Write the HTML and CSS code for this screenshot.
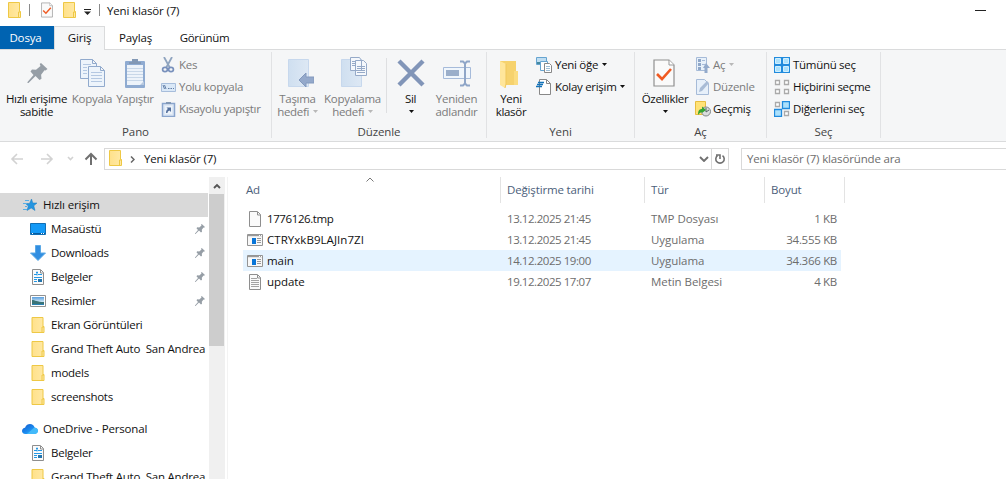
FILE: index.html
```html
<!DOCTYPE html>
<html lang="tr">
<head>
<meta charset="utf-8">
<title>Yeni klasör (7)</title>
<link rel="stylesheet" href="styles.css">
</head>
<body>
<svg class="defs" width="0" height="0">
  <defs>
    <linearGradient id="gold" x1="0" x2="1"><stop offset="0" stop-color="#ffe18a"/><stop offset="1" stop-color="#ffe9a6"/></linearGradient>
    <linearGradient id="cloud" x1="0" x2="1" y2="1"><stop offset="0" stop-color="#1557c8"/><stop offset=".5" stop-color="#1a88ee"/><stop offset="1" stop-color="#42c5ff"/></linearGradient>
    <linearGradient id="sky" y2="1" x2="0"><stop offset="0" stop-color="#5a9fe0"/><stop offset=".6" stop-color="#cfe6f2"/></linearGradient>
    <linearGradient id="pale" x1="0" x2="1"><stop offset="0" stop-color="#cfdff0"/><stop offset="1" stop-color="#dde8f4"/></linearGradient>
  </defs>
  <symbol id="folder" viewBox="0 0 13 16"><path d="M.5.5h11v9h1v6H.5z" fill="url(#gold)" stroke="#eec845"/><path d="M10.500 15v-5h2" fill="none" stroke="#eec845"/></symbol>
  <symbol id="doc" viewBox="0 0 12 16"><path d="M.5.5h8l3 3v12H.5z" fill="#fafafa" stroke="#8e8e8e"/><path d="M8.500 1v3h3" fill="none" stroke="#8e8e8e"/></symbol>
  <symbol id="text-doc" viewBox="0 0 12 16"><use href="#doc" width="12" height="16"/><path d="M2 4.500h6M2 6.500h8M2 8.500h8M2 10.500h8M2 12.500h8" stroke="#a3a3a3"/></symbol>
  <symbol id="rich-doc" viewBox="0 0 12 16"><use href="#doc" width="12" height="16"/><path d="M2 5.500h3M4 3.500h2M5 2.500v4M6 5.500h4M2 8.500h8M2 10.500h3M2 12.500h3" stroke="#2498e5"/><path d="M6 10h4v3H6z" fill="#2475ad"/></symbol>
  <symbol id="app" viewBox="0 0 16 12"><path d="M.5.5h15v11H.5z" fill="#f8f8f8" stroke="#949494"/><path d="M1 1.500h14" stroke="#999" stroke-width="1.400"/><path d="M12 1.500h1M14 1.500h1" stroke="#fff"/><path d="M5 4h4v6H5z" fill="#0875d8"/><path d="M10 4.500h4M10 6.500h4M10 8.500h4" stroke="#999"/></symbol>
  <symbol id="pin" viewBox="0 0 20 20"><path d="M13.500 0 20 6l-2 1.500-1-.3-3.400 4.500.4 4-2 1.300-4-4L1 20H0v-1l6-7-3-3.500L4.500 6.500l4 .3L13 3l-.8-2z" fill="#969ea6"/></symbol>
  <symbol id="check-page" viewBox="0 0 22 28"><path d="M1 1h15l5 5v21H1z" fill="#fafafa" stroke="#909090" stroke-width="1.200"/><path d="M16 1v5h5" fill="#fff" stroke="#999"/><path d="m4 15 5 5 9-10" fill="none" stroke="#f05a22" stroke-width="2.600"/></symbol>
  <symbol id="caret" viewBox="0 0 5 3"><path d="M0 0h5L2.500 3z" fill="currentColor"/></symbol>
</svg>

<header class="titlebar">
  <svg class="folder"><use href="#folder"/></svg><i class="bar"></i>
  <svg class="quick-check"><use href="#check-page"/></svg>
  <svg class="folder quick-folder"><use href="#folder"/></svg>
  <svg class="quick-caret" viewBox="0 0 7 6"><path d="M0 .5h7" stroke="#222"/><path d="M0 2.500h7L3.500 6z" fill="#222"/></svg><i class="bar bar-end"></i>
  <span>Yeni klasör (7)</span>
  <i class="minimize"></i>
</header>

<nav class="tabs">
  <span class="tab app-menu">Dosya</span><span class="tab active">Giriş</span><span class="tab share">Paylaş</span><span class="tab view">Görünüm</span>
</nav>

<section class="ribbon">
  <div class="group pano">
    <div class="tools">
      <div class="big pin-btn"><svg viewBox="0 0 32 32"><use href="#pin" x="6" y="6" width="21" height="20"/></svg><b>Hızlı erişime<br>sabitle</b></div>
      <div class="big copy off"><svg viewBox="0 0 32 32"><g fill="#edf4fb" stroke="#91aacd"><path d="M4.500 2.500h12l4 4v15h-16zM16.500 2.500v4h4"/><path d="M12.500 9.500h12l4 4v16h-16zM24.500 9.500v4h4"/><path d="M7 7.500h8M7 10.500h4M7 13.500h4M7 16.500h4M15 15.500h11M15 18.500h11M15 21.500h11M15 24.500h11" stroke="#b4c8e2"/></g></svg><b>Kopyala</b></div>
      <div class="big paste off"><svg viewBox="0 0 32 32"><rect x="6" y="4" width="20" height="27" rx="1" fill="#8fabd1"/><path d="M8 8h16v20H8z" fill="#edf3fa"/><path d="M8 11.500h16M8 14.500h16M8 17.500h16M8 20.500h16M8 23.500h16" stroke="#c8d7e8"/><path d="M10 7V5h3V2h6v3h3v2z" fill="#8298b5"/><path d="M21 28l4-4v4z" fill="#b8c9df"/></svg><b>Yapıştır</b></div>
      <div class="stack off">
        <div class="row"><svg viewBox="0 0 16 16"><path d="m3 0 6 11M11 0 5 11" stroke="#8fa4bf" stroke-width="1.800"/><ellipse cx="4" cy="12.500" rx="2.400" ry="2.200" fill="none" stroke="#7890bc" stroke-width="1.700"/><ellipse cx="10" cy="12.500" rx="2.400" ry="2.200" fill="none" stroke="#7890bc" stroke-width="1.700"/></svg><b>Kes</b></div>
        <div class="row"><svg viewBox="0 0 16 16"><path d="M.5 4.500h14v8H.5z" fill="#dae8f7" stroke="#a7bddb"/><path d="m2 6 1.500 4m0-4L5 10M7 9.500h1.500M9.500 9.500h1.500M12 9.500h1" stroke="#637fa7"/></svg><b>Yolu kopyala</b></div>
        <div class="row"><svg viewBox="0 0 16 16"><path d="M1.500 2.500h12v13h-12z" fill="#dce7f4" stroke="#8aa5cd" stroke-width="1.500"/><path d="M5 3V1h5v2z" fill="#8298b5"/><path d="M4 5h7v8H4z" fill="#edf3fa"/><path d="M5 12c0-2.500.8-3.500 2-4L5.500 6.500H10V11L8.500 9.500C7 10 6.500 11 6.500 12z" fill="#536f9c"/></svg><b>Kısayolu yapıştır</b></div>
      </div>
    </div>
    <h2>Pano</h2>
  </div>
  <div class="group organize">
    <div class="tools">
      <div class="big move off"><svg viewBox="0 0 32 32"><path d="M6.500 2.500h20v27h-20z" fill="url(#pale)" stroke="#c7d8ed"/><path d="m17 23 7-7v4h8v6h-8v4z" fill="#94a9cb" stroke="#8399bd"/></svg><b>Taşıma<br>hedefi <svg class="caret"><use href="#caret"/></svg></b></div>
      <div class="big copy-to off"><svg viewBox="0 0 32 32"><path d="M4.500 2.500h20v27h-20z" fill="url(#pale)" stroke="#c7d8ed"/><g fill="#f5f8fc" stroke="#96aac8"><path d="M13.500.5h9l2 3v10h-11zM18.500 3.500h8l3 3v12h-11z"/><path d="M20 9.500h8M20 11.500h8M20 13.500h8M20 15.500h8M15 4.500h3M15 6.500h3M15 8.500h3"/></g></svg><b>Kopyalama<br>hedefi <svg class="caret"><use href="#caret"/></svg></b></div>
      <i class="divider"></i>
      <div class="big delete"><svg viewBox="0 0 32 32"><path d="M4 4 28 28M28 4 4 28" stroke="#8195b8" stroke-width="4.400"/></svg><b>Sil<br><svg class="caret"><use href="#caret"/></svg></b></div>
      <div class="big rename off"><svg viewBox="0 0 32 32"><path d="M2.500 10.500h27v11h-27z" fill="#f0f6fc" stroke="#a6bbda"/><path d="M5 13h13v6H5z" fill="#9aaeca"/><path d="M19 4.500h3l2 2 2-2h3M24 6v21M19 28.500h3l2-2 2 2h3" fill="none" stroke="#8fa6c8" stroke-width="2"/></svg><b>Yeniden<br>adlandır</b></div>
    </div>
    <h2>Düzenle</h2>
  </div>
  <div class="group new">
    <div class="tools">
      <div class="big new-folder"><svg viewBox="0 0 32 32"><path d="M5 4h16v10h2v14H5z" fill="#f6d26d"/><path d="m5 4 6 3v20l-1 4-5-3z" fill="#ffe69b"/><path d="M11 7v20l-1 4" fill="none" stroke="#efc75d"/><path d="M19 14h4v14h-4z" fill="#fbdc80"/></svg><b>Yeni<br>klasör</b></div>
      <div class="stack">
        <div class="row"><svg viewBox="0 0 16 16"><path d="M.5.5h10v7H.5z" fill="#c0def2" stroke="#66a4d0"/><path d="M1 5h4v2H1z" fill="#4489a0"/><path d="M4.500 4.500h7v9h-7z" fill="#fff" stroke="#66a4d0"/><path d="M8.500 6.500h5l2 2v7h-7z" fill="#fff" stroke="#888"/><path d="M10 9.500h4M10 11.500h4M10 13.500h4" stroke="#9fbfd7"/></svg><b>Yeni öğe <svg class="caret"><use href="#caret"/></svg></b></div>
        <div class="row"><svg viewBox="0 0 16 16"><path d="M3.500.5h7l4 4v11h-11z" fill="#fff" stroke="#888"/><path d="M10.500.5v4h4" fill="none" stroke="#888"/><path d="M0 7.500h6M1 5.500h6M2 3.500h6" stroke="#1473b9" stroke-width="1.300"/></svg><b>Kolay erişim <svg class="caret"><use href="#caret"/></svg></b></div>
      </div>
    </div>
    <h2>Yeni</h2>
  </div>
  <div class="group open">
    <div class="tools">
      <div class="big properties"><svg viewBox="0 0 32 32"><use href="#check-page" x="4" y="2" width="22" height="28"/></svg><b>Özellikler<br><svg class="caret"><use href="#caret"/></svg></b></div>
      <div class="stack">
        <div class="row off"><svg viewBox="0 0 16 16"><path d="M1.500.5h10v13h-10z" fill="#e8f1fa" stroke="#a6bbd8"/><path d="M3 2h3v3H3zM3 6h3v3H3zM3 10h3v3H3z" fill="#8fa7c8"/><path d="M7 3.500h3M7 7.500h3" stroke="#a6bbd8"/><path d="m11 6 4 5h-2.500v5h-3v-5H8z" fill="#93aacb"/></svg><b>Aç <svg class="caret"><use href="#caret"/></svg></b></div>
        <div class="row off"><svg viewBox="0 0 16 16"><path d="M1.500.5h8l4 4v11h-12z" fill="#e7f0fa" stroke="#a6bbd8"/><path d="m4 13 1-4 7-7 2 2-7 8z" fill="#a9bcd6"/></svg><b>Düzenle</b></div>
        <div class="row"><svg viewBox="0 0 16 16"><path d="M.5.5h10v13H.5z" fill="#ffe277" stroke="#e7bd3f"/><circle cx="11" cy="10.500" r="4.500" fill="#d9dddd" stroke="#818788"/><path d="M11 7v4l3-2" fill="none" stroke="#566"/><path d="M3 14c0-4 1-6 4-6V5.500L11 9l-4 3v-1c-2 .5-3 1.500-4 3z" fill="#36a631"/></svg><b>Geçmiş</b></div>
      </div>
    </div>
    <h2>Aç</h2>
  </div>
  <div class="group select">
    <div class="tools">
      <div class="stack">
        <div class="row"><svg viewBox="0 0 16 16"><path d="M0 0h16v16H0z" fill="#218bdd"/><path d="M1.500 1.500h5v5h-5zM9.500 1.500h5v5h-5zM1.500 9.500h5v5h-5zM9.500 9.500h5v5h-5z" fill="#ace1fc" stroke="#d0efff"/></svg><b>Tümünü seç</b></div>
        <div class="row"><svg viewBox="0 0 16 16"><path d="M1.500 1.500h4v4h-4zM10.500 1.500h4v4h-4zM1.500 10.500h4v4h-4zM10.500 10.500h4v4h-4z" fill="#fff" stroke="#aaa" stroke-width="1.300"/></svg><b>Hiçbirini seçme</b></div>
        <div class="row"><svg viewBox="0 0 16 16"><path d="M1.500 1.500h4v4h-4zM10.500 10.500h4v4h-4z" fill="#fff" stroke="#aaa" stroke-width="1.300"/><path d="M8.500.5h7v7h-7zM.5 8.500h7v7h-7z" fill="#ace1fc" stroke="#218bdd" stroke-width="1.300"/></svg><b>Diğerlerini seç</b></div>
      </div>
    </div>
    <h2>Seç</h2>
  </div>
</section>

<section class="locationbar">
  <svg class="nav-arrows" viewBox="0 0 100 21"><g fill="none" stroke="#d2d2d2" stroke-width="1.600"><path d="M12 11h11M17 6l-5 5 5 5M41 11h11M47 6l5 5-5 5"/><path d="m68 9 2.500 2.500L73 9"/><path d="M91 17V6M85.500 11.500 91 6l5.500 5.500" stroke="#707070" stroke-width="2"/></g></svg>
  <div class="address">
    <svg class="folder"><use href="#folder"/></svg>
    <svg class="crumb" viewBox="0 0 5 7"><path d="m1 .5 3 3-3 3" fill="none" stroke="#666" stroke-width="1.500"/></svg>
    <span>Yeni klasör (7)</span>
    <svg class="dropdown" viewBox="0 0 10 6"><path d="m1 1 4 4 4-4" fill="none" stroke="#707070" stroke-width="1.900"/></svg>
    <div class="refresh"><svg viewBox="0 0 12 12"><path d="M8.500 2.600a4.200 4.200 0 1 1-5 0M2 2h4v4" fill="none" stroke="#707070" stroke-width="1.600"/></svg></div>
  </div>
  <div class="search"><span>Yeni klasör (7) klasöründe ara</span></div>
</section>

<main class="content">
  <aside class="tree">
    <div class="node root selected"><svg viewBox="0 0 16 16"><path d="m9.500 2 1.300 4H15l-3.200 2.800 1.200 4.700-3.800-2.500-4.200 2.500L6.300 9 3.500 6.500h4z" fill="#2495e0" stroke="#1a7cc0" stroke-width=".5"/><path d="M3 3.500h4M1 6.500h4M3 9.500h2M1 12.500h4" stroke="#58aee6"/></svg><span>Hızlı erişim</span></div>
    <div class="node"><svg viewBox="0 0 16 16"><path d="M.5 2.500h15v11H.5z" fill="#149af7" stroke="#116fb5"/><path d="M1 12.500h14" stroke="#075c9f"/><path d="M2 12.500h1M11 12.500h1M13 12.500h1" stroke="#fff"/></svg><span>Masaüstü</span><svg class="tack"><use href="#pin"/></svg></div>
    <div class="node"><svg viewBox="0 0 16 16"><path d="M5.500.5h5V8h5L8 15.500.5 8h5z" fill="#318ee1" stroke="#5ba9e6"/></svg><span>Downloads</span><svg class="tack"><use href="#pin"/></svg></div>
    <div class="node"><svg><use href="#rich-doc"/></svg><span>Belgeler</span><svg class="tack"><use href="#pin"/></svg></div>
    <div class="node"><svg viewBox="0 0 16 16"><path d="M.5 2.500h15v11H.5z" fill="#fff" stroke="#919191"/><path d="M2 4h12v8H2z" fill="url(#sky)"/><path d="M2 7c3 0 5 2 12 2v3H2z" fill="#3a7377"/><path d="M2 11h12v1H2z" fill="#2a82b4"/></svg><span>Resimler</span><svg class="tack"><use href="#pin"/></svg></div>
    <div class="node"><svg><use href="#folder"/></svg><span>Ekran Görüntüleri</span></div>
    <div class="node"><svg><use href="#folder"/></svg><span class="long">Grand Theft Auto&nbsp; San Andrea</span></div>
    <div class="node"><svg><use href="#folder"/></svg><span>models</span></div>
    <div class="node"><svg><use href="#folder"/></svg><span>screenshots</span></div>
    <div class="node root cloud"><svg viewBox="0 0 16 16"><path d="M3.500 13C1 13 0 11.500 0 10c0-2 1.500-3.200 3-3.300C4 4 6 3 8 3c2.300 0 4 1.300 4.600 3.500C15 6.700 16 8.300 16 9.800c0 2-1.500 3.200-3.500 3.200z" fill="url(#cloud)"/><path d="m5 13 7-6.300C15 6.700 16 8.500 16 9.800c0 2-1.500 3.200-3.500 3.200z" fill="#43bafa"/></svg><span>OneDrive - Personal</span></div>
    <div class="node"><svg><use href="#rich-doc"/></svg><span>Belgeler</span></div>
    <div class="node"><svg><use href="#folder"/></svg><span class="long">Grand Theft Auto&nbsp; San Andrea</span></div>
  </aside>
  <div class="scrollbar"><svg viewBox="0 0 8 6"><path d="m1 5 3-3 3 3" fill="none" stroke="#555" stroke-width="1.900"/></svg><i></i></div>
  <div class="files">
    <svg class="sort" viewBox="0 0 8 5"><path d="m.5 4.500 3.500-3.500 3.500 3.500" fill="none" stroke="#777"/></svg>
    <div class="columns"><span>Ad</span><span>Değiştirme tarihi</span><span>Tür</span><span>Boyut</span></div>
    <div class="file"><div><svg><use href="#doc"/></svg><span class="digits">1776126.tmp</span></div><span class="date">13.12.2025 21:45</span><span>TMP Dosyası</span><span class="size">1 KB</span></div>
    <div class="file"><div><svg><use href="#app"/></svg><span class="mixed">CTRYxkB9LAJIn7ZI</span></div><span class="date">13.12.2025 21:45</span><span>Uygulama</span><span class="size">34.555 KB</span></div>
    <div class="file hover"><div><svg><use href="#app"/></svg><span>main</span></div><span class="date">14.12.2025 19:00</span><span>Uygulama</span><span class="size">34.366 KB</span></div>
    <div class="file"><div><svg><use href="#text-doc"/></svg><span>update</span></div><span class="date">19.12.2025 17:07</span><span>Metin Belgesi</span><span class="size">4 KB</span></div>
  </div>
</main>
</body>
</html>
```

FILE: styles.css
```css
* { box-sizing: border-box; }
body { margin: 0; width: 1006px; height: 479px; overflow: hidden; display: flex; flex-direction: column; background: #fff; color: #111; font: 11.5px/13px "Open Sans", "Noto Sans", sans-serif; letter-spacing: -.15px; }
svg { display: block; flex: none; }
span, b { white-space: nowrap; }
b, h2 { font-weight: 400; }
.defs { position: absolute; }
.folder { width: 13px; height: 16px; }

.titlebar { height: 26px; flex: none; display: flex; align-items: center; padding: 0 20px 6px 8px; }
.bar { width: 1px; height: 12px; margin: 0 11px 0 8px; background: #8b8b8b; }
.quick-check { width: 12px; height: 16px; }
.quick-folder { margin-left: 10px; }
.quick-caret { width: 7px; height: 6px; margin-left: 8px; margin-top: 3px; }
.bar-end { margin-right: 7px; }
.minimize { width: 11px; height: 1px; margin-left: auto; background: #222; }

.tabs { height: 24px; flex: none; display: flex; border-bottom: 1px solid #dadbdc; }
.tab { line-height: 24px; height: 24px; text-align: center; }
.app-menu { width: 54px; height: 23px; color: #fff; background: #0063b1; padding-right: 3px; }
.active { width: 51px; background: #f5f6f7; border: 1px solid #dadbdc; border-bottom: 0; line-height: 22px; }
.share { width: 61px; }
.view { width: 77px; letter-spacing: -.3px; }

.ribbon { height: 92px; flex: none; display: flex; padding-top: 2px; background: #f5f6f7; border-bottom: 1px solid #dadbdc; letter-spacing: -.3px; }
.group { height: 86px; border-right: 1px solid #e1e2e4; display: flex; flex-direction: column; justify-content: space-between; }
.group h2 { margin: 0; height: 13px; font-size: 11.5px; line-height: 13px; text-align: center; color: #444; letter-spacing: -.1px; }
.tools { display: flex; }
.pano { width: 272px; } .organize { width: 215px; } .new { width: 148px; } .open { width: 132px; } .select { width: 114px; }
.big { display: flex; flex-direction: column; align-items: center; padding-top: 5px; text-align: center; }
.big > svg { width: 32px; height: 32px; margin-bottom: 3px; }
.pin-btn { width: 73px; } .copy { width: 38px; } .paste { width: 48px; }
.move { width: 51px; } .copy-to { width: 59px; } .delete { width: 47px; } .rename { width: 45px; }
.new-folder { width: 48px; } .properties { width: 60px; }
.divider { width: 1px; height: 55px; margin-top: 6px; margin-left: 4px; background: #dedfe1; }
.stack { display: flex; flex-direction: column; padding-top: 2px; }
.row { height: 22px; display: flex; align-items: center; gap: 2px; }
.row > svg { width: 16px; height: 16px; }
.row > b { margin-top: -1px; }
.pano .stack { margin-left: 2px; }
.new .stack { margin-left: 1px; } .new .row { gap: 3px; }
.select .stack { margin-left: 7px; } .select .row { gap: 3px; }
.off { color: #7b7b7b; }
.caret { display: inline-block; width: 5px; height: 3px; margin-left: 1px; vertical-align: 3px; }
.off .caret { color: #b8b8b8; }

.locationbar { height: 35px; flex: none; display: flex; padding-top: 6px; }
.nav-arrows { width: 100px; height: 21px; }
.address { width: 625px; height: 22px; margin-left: 4px; border: 1px solid #d9d9d9; display: flex; align-items: center; padding-left: 4px; }
.address > .folder { margin-top: -2px; }
.address > span { margin-top: -1px; }
.crumb { width: 5px; height: 7px; margin: 0 9px 0 8px; }
.dropdown { width: 10px; height: 6px; margin-left: auto; }
.refresh { width: 17px; height: 20px; margin-left: 2px; border-left: 1px solid #d9d9d9; display: grid; place-items: center; }
.refresh svg { width: 12px; height: 12px; }
.search { flex: 1; height: 22px; margin-left: 12px; padding: 3px 5px; border: 1px solid #d9d9d9; border-right: 0; color: #6d6d6d; }

.content { flex: 1; min-height: 0; display: flex; }
.tree { width: 208px; padding-top: 16px; overflow: hidden; }
.node { height: 24px; display: flex; align-items: center; padding-left: 30px; gap: 5px; letter-spacing: -.25px; }
.node > svg { width: 16px; height: 16px; }
.node > span { margin-top: -2px; }
.long { letter-spacing: -.22px; }
.node .tack { width: 10px; height: 10px; margin: 0 3px 0 auto; }
.root { padding-left: 22px; letter-spacing: -.15px; }
.selected { background: #d9d9d9; }
.cloud { margin-top: 8px; }
.scrollbar { width: 16px; margin-left: 1px; background: #f0f0f0; display: flex; flex-direction: column; align-items: center; padding-top: 6px; }
.scrollbar svg { width: 8px; height: 6px; }
.scrollbar i { width: 15px; height: 152px; margin: 5px 1px 0 0; background: #cdcdcd; }
.files { flex: 1; margin-left: 2px; padding-left: 15px; border-left: 1px solid #f3f3f3; position: relative; }
.sort { position: absolute; left: 138px; top: 0; width: 8px; height: 5px; }
.columns, .file { display: grid; grid-template-columns: 257px 144px 120px 77px; }
.columns { height: 26px; margin-bottom: 5px; grid-template-columns: 258px 144px 120px 80px; color: #4c607a; }
.columns span { line-height: 26px; border-right: 1px solid #e3e3e3; padding-left: 6px; }
.columns span:first-child { padding-left: 3px; }
.file { width: 598px; height: 21px; align-items: center; color: #6d6d6d; letter-spacing: -.05px; }
.file.hover { background: #e5f3ff; }
.file > div { display: flex; align-items: center; padding-left: 4px; gap: 4px; color: #111; }
.file > div svg { width: 16px; height: 16px; }
.file > span { padding-left: 7px; }
.digits { letter-spacing: -.4px; }
.mixed { letter-spacing: .05px; }
.file .date { letter-spacing: -.45px; }
.file .size { text-align: right; padding-right: 4px; letter-spacing: -.3px; }
```
